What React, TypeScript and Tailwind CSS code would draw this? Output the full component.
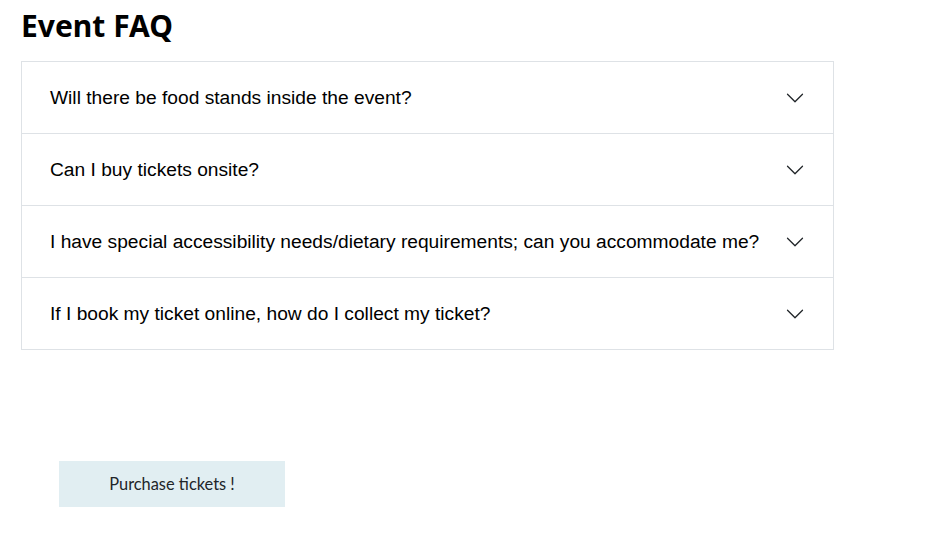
import React from "react";

const questions = [
  "Will there be food stands inside the event?",
  "Can I buy tickets onsite?",
  "I have special accessibility needs/dietary requirements; can you accommodate me?",
  "If I book my ticket online, how do I collect my ticket?",
];

const Chevron: React.FC = () => (
  <svg width="20" height="20" viewBox="0 0 16 16" fill="#212529" className="shrink-0">
    <path
      fillRule="evenodd"
      d="M1.646 4.646a.5.5 0 0 1 .708 0L8 10.293l5.646-5.647a.5.5 0 0 1 .708.708l-6 6a.5.5 0 0 1-.708 0l-6-6a.5.5 0 0 1 0-.708z"
    />
  </svg>
);

const App: React.FC = () => {
  return (
    <div className="min-h-screen bg-white px-[21px] pt-[8px]">
      <h1 className="text-[30px] font-bold leading-[36px] text-black mb-[17px] font-['Noto_Sans',sans-serif]">
        Event FAQ
      </h1>

      <div className="w-[813px] border border-[#dee2e6] divide-y divide-[#dee2e6]">
        {questions.map((q) => (
          <div key={q}>
            <button className="flex items-center justify-between w-full h-[71px] px-[28px] text-left">
              <span className="mt-[2px] text-[19.2px] text-black font-['Liberation_Sans',Arial,sans-serif]">
                {q}
              </span>
              <Chevron />
            </button>
          </div>
        ))}
      </div>

      <div className="pl-[38px] pt-[111px]">
        <button className="w-[226px] h-[46px] bg-[#e1eef2] text-[16.4px] text-[#212529] font-['Lato',sans-serif]">
          Purchase tickets !
        </button>
      </div>
    </div>
  );
};

export default App;
